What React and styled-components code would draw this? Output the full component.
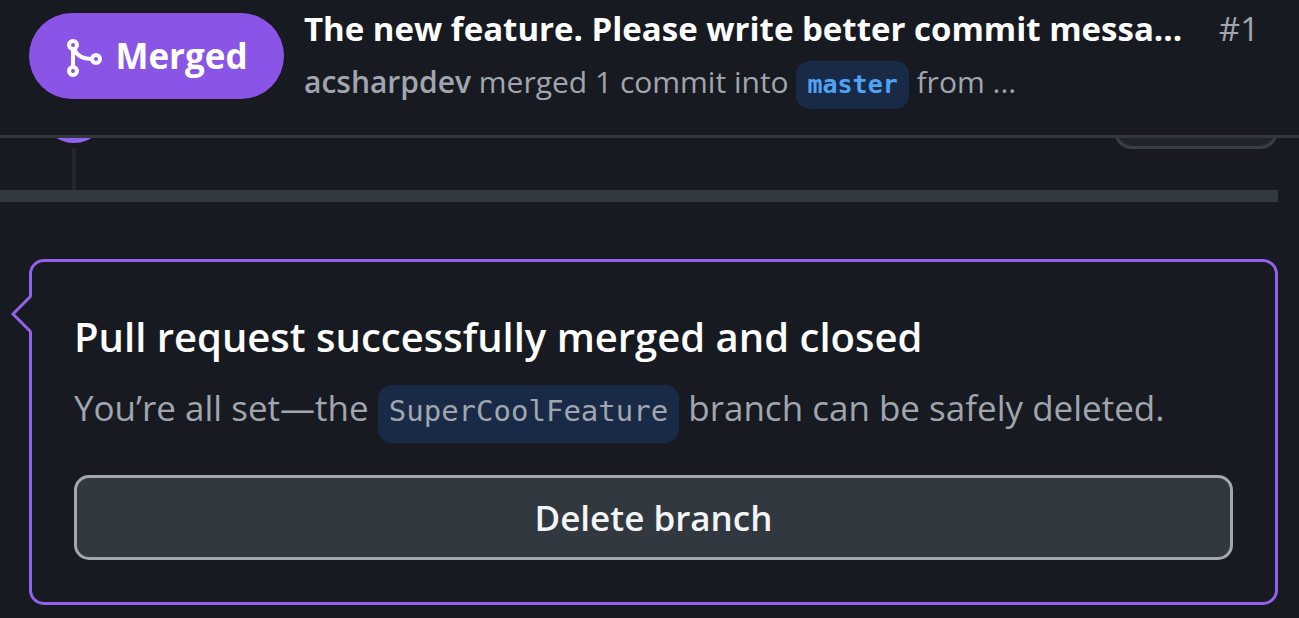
import React from "react";
import styled, { createGlobalStyle, css } from "styled-components";

const GlobalStyle = createGlobalStyle`
  *, *::before, *::after { box-sizing: border-box; }
  body {
    margin: 0;
    background: #181a21;
    color: #a0a6af;
    font-family: "Open Sans", "Noto Sans", sans-serif;
  }
`;

const Page = styled.div`
  overflow: hidden;
`;

const Header = styled.header`
  display: flex;
  align-items: flex-start;
  gap: 20px;
  height: 138px;
  padding: 4px 40px 0 29px;
  border-bottom: 3px solid #33363d;
`;

const StateBadge = styled.span`
  display: flex;
  flex: none;
  align-items: center;
  justify-content: center;
  gap: 12px;
  width: 255px;
  height: 86px;
  margin-top: 9px;
  border-radius: 43px;
  background: #8a55e6;
  color: #fff;
  font-size: 35px;
  font-weight: 700;
  line-height: 48px;
`;

const Summary = styled.div`
  flex: 1;
  min-width: 0;
`;

const TitleRow = styled.div`
  display: flex;
  justify-content: space-between;
  gap: 8px;
  font-size: 33px;
  line-height: 50px;
`;

const Title = styled.h1`
  margin: 0;
  min-width: 0;
  color: #fff;
  font-size: inherit;
  font-weight: 700;
  white-space: nowrap;
`;

const Meta = styled.p`
  margin: 0;
  font-size: 30px;
  line-height: 56px;
  white-space: nowrap;
`;

const Author = styled.strong`
  font-weight: 600;
`;

const BranchName = styled.code`
  display: inline-block;
  border-radius: 14px;
  background: #182a45;
  font-family: "DejaVu Sans Mono", monospace;
  ${({ $link }) =>
    $link
      ? css`
          padding: 0 11px;
          color: #4fa3f5;
          font-size: 25px;
          font-weight: 700;
          line-height: 48px;
        `
      : css`
          padding: 0 11px 6px;
          font-size: 29px;
          line-height: 52px;
        `}
`;

const Timeline = styled.div`
  display: flex;
  align-items: flex-end;
  justify-content: space-between;
  height: 52px;
  padding: 0 21px 0 41px;
  overflow: hidden;
`;

const TimelineTrack = styled.div`
  display: flex;
  flex-direction: column;
  align-items: center;
  gap: 5px;
`;

const TimelineDot = styled.span`
  width: 66px;
  height: 66px;
  border-radius: 50%;
  background: #9461ea;
`;

const TimelineLine = styled.span`
  width: 4px;
  height: 42px;
  background: #20262e;
`;

const RevertButton = styled.button`
  width: 164px;
  height: 74px;
  margin-bottom: 41px;
  border: 3px solid #393e46;
  border-radius: 18px;
  background: #20242b;
`;

const Divider = styled.hr`
  height: 12px;
  margin: 0 21px 57px 0;
  border: 0;
  background: #32393f;
`;

const MergePanel = styled.section`
  position: relative;
  margin: 0 21px 13px 29px;
  padding: 47px 42px 42px;
  border: 3px solid #9461ea;
  border-radius: 15px;
`;

const Pointer = styled.svg`
  position: absolute;
  top: 31px;
  left: -22px;
  width: 22px;
  height: 42px;
`;

const PanelTitle = styled.h2`
  margin: 0;
  color: #fff;
  font-size: 40px;
  font-weight: 600;
  line-height: 56px;
  white-space: nowrap;
`;

const PanelText = styled.p`
  margin: 17px 0 32px;
  font-size: 35px;
  line-height: 52px;
  white-space: nowrap;
`;

const DeleteButton = styled.button`
  display: block;
  width: 100%;
  height: 85px;
  border: 3px solid #a3a8b0;
  border-radius: 15px;
  background: #32383f;
  color: #f2f4f6;
  font-family: inherit;
  font-size: 35px;
  font-weight: 600;
`;

function MergeIcon() {
  return (
    <svg width="38" height="44" viewBox="0 0 38 44" fill="none" stroke="#fff" strokeWidth="4" aria-hidden="true">
      <circle cx="8" cy="11" r="4" />
      <circle cx="8" cy="37" r="4" />
      <circle cx="31" cy="25" r="4" />
      <path d="M8 15v18M9 15c3 7 9 10 18 10" />
    </svg>
  );
}

export default function App() {
  return (
    <Page>
      <GlobalStyle />
      <Header>
        <StateBadge>
          <MergeIcon />
          Merged
        </StateBadge>
        <Summary>
          <TitleRow>
            <Title>The new feature. Please write better commit messa...</Title>
            <span>#1</span>
          </TitleRow>
          <Meta>
            <Author>acsharpdev</Author> merged 1 commit into <BranchName $link>master</BranchName> from ...
          </Meta>
        </Summary>
      </Header>
      <main>
        <Timeline>
          <TimelineTrack>
            <TimelineDot />
            <TimelineLine />
          </TimelineTrack>
          <RevertButton type="button" aria-label="Revert" />
        </Timeline>
        <Divider />
        <MergePanel>
          <Pointer viewBox="0 0 22 42" aria-hidden="true">
            <path d="M22 3L3 21L22 39Z" fill="#181a21" />
            <path d="M21 3L3 21L21 39" fill="none" stroke="#9461ea" strokeWidth="3" />
          </Pointer>
          <PanelTitle>Pull request successfully merged and closed</PanelTitle>
          <PanelText>
            You’re all set—the <BranchName>SuperCoolFeature</BranchName> branch can be safely deleted.
          </PanelText>
          <DeleteButton type="button">Delete branch</DeleteButton>
        </MergePanel>
      </main>
    </Page>
  );
}
